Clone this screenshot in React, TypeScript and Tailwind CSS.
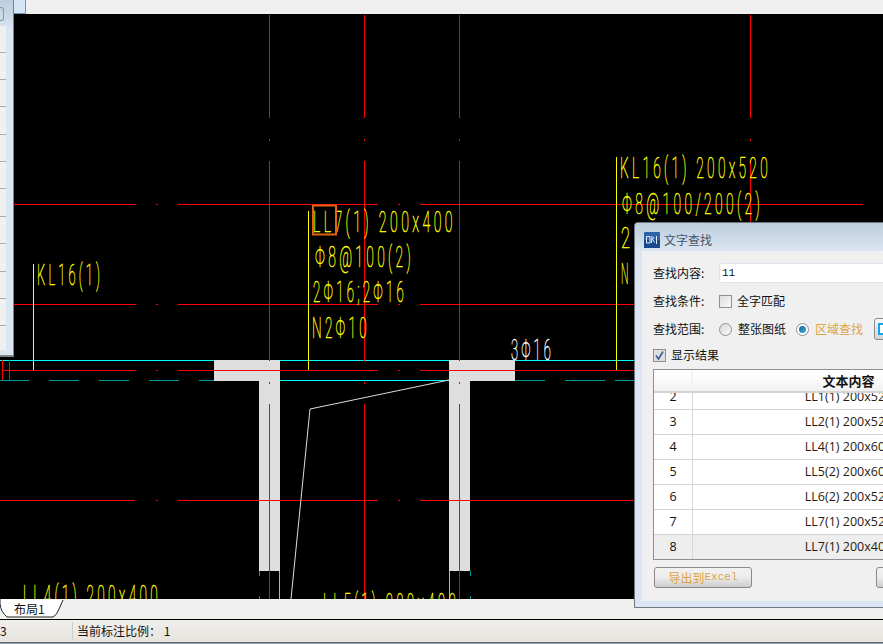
import React from 'react';

const CJK = "font-['Noto_Sans_CJK_SC','Noto_Sans',sans-serif]";

// drawing data, page coordinates (the svg viewBox starts at y=14)
const redH: [number, number, number][] = [
    [204, 14, 136], [204, 156, 158], [204, 178, 378], [204, 398, 400], [204, 420, 863],
    [304, 14, 136], [304, 156, 158], [304, 178, 378], [304, 398, 400], [304, 420, 640],
    [370, 2, 136], [370, 156, 158], [370, 178, 378], [370, 398, 400], [370, 420, 640],
    [500, 0, 135], [500, 156, 158], [500, 178, 378], [500, 398, 400], [500, 420, 640],
];

const redV: [number, number, number][] = [269, 364, 459].flatMap((x) => [
    [x, 15, 118], [x, 139, 141], [x, 161, 361], [x, 382, 384], [x, 404, 599],
] as [number, number, number][]).concat([[750, 15, 118], [750, 139, 141], [750, 160, 222]]);

// w includes the trailing letter gap
const cadLabels: { x: number; y: number; w: number; t: string; fill?: string }[] = [
    { x: 37, y: 285, w: 66, t: 'KL16(1)' },
    { x: 313, y: 232, w: 143, t: 'LL7(1) 200x400' },
    { x: 315, y: 267, w: 99, t: 'Φ8@100(2)' },
    { x: 313, y: 302, w: 94, t: '2Φ16;2Φ16' },
    { x: 312, y: 338, w: 58, t: 'N2Φ10' },
    { x: 511, y: 360, w: 43, t: '3Φ16', fill: '#ffffff' },
    { x: 620, y: 178, w: 151, t: 'KL16(1) 200x520' },
    { x: 622, y: 214, w: 141, t: 'Φ8@100/200(2)' },
    { x: 621, y: 248, w: 13, t: '2' },
    { x: 621, y: 284, w: 10, t: 'N' },
    { x: 23, y: 606, w: 138, t: 'LL4(1) 200x400' },
    { x: 323, y: 614, w: 136, t: 'LL5(1) 200x400' },
];

const rows = [
    { n: 2, t: 'LL1(1) 200x520' },
    { n: 3, t: 'LL2(1) 200x520' },
    { n: 4, t: 'LL4(1) 200x600' },
    { n: 5, t: 'LL5(2) 200x600' },
    { n: 6, t: 'LL6(2) 200x520' },
    { n: 7, t: 'LL7(1) 200x520' },
    { n: 8, t: 'LL7(1) 200x400', selected: true },
];

function Drawing() {
    return (
        <svg className="block w-full h-full" viewBox="0 14 883 585" width="883" height="585">
            <g shapeRendering="crispEdges">
                {/* columns */}
                <path d="M214 360H280V571H259V381H214Z" fill="#dedede" />
                <path d="M449 360H515V381H470V571H449Z" fill="#dedede" />

                {/* cyan wall lines */}
                <path d="M0 360.5H214M280 360.5H449M515 360.5H640M280 380.5H449M279.5 571V599M449.5 571V599" stroke="#00ffff" fill="none" />
                <path d="M0 380.5H29M49 380.5H79M99 380.5H129M149 380.5H179M199 380.5H214M515 380.5H545M565 380.5H605M615 380.5H640M259.5 571V576M259.5 596V599M470.5 571V576M470.5 596V599" stroke="#009a9a" fill="none" />

                {redH.map(([y, a, b], i) => (
                    <rect key={i} x={a} y={y} width={b - a} height={1} fill="#ff0000" />
                ))}
                {redV.map(([x, a, b], i) => (
                    <rect key={i} x={x} y={a} width={1} height={b - a} fill="#ff0000" />
                ))}
                <path d="M2.5 360V380M9.5 360V380" stroke="#ff0000" fill="none" />

                {/* leaders */}
                <path d="M33.5 264V370M308.5 211V370M616.5 157V370" stroke="#ffff00" fill="none" />
            </g>

            <path d="M449 380L310 409L291 599" stroke="#dddddd" fill="none" />

            <g className="font-['Roboto',sans-serif] font-thin">
                {cadLabels.map((l) => (
                    <text
                        key={l.t + l.x}
                        x={l.x}
                        y={l.y}
                        fontSize="29"
                        letterSpacing="7"
                        fill={l.fill ?? '#ffff00'}
                        stroke={l.fill ?? '#ffff00'}
                        strokeWidth="0.5"
                        textLength={l.w}
                        lengthAdjust="spacingAndGlyphs"
                    >
                        {l.t}
                    </text>
                ))}
            </g>

            {/* search hit */}
            <rect x="313" y="205.5" width="23" height="29" fill="none" stroke="#e8610f" strokeWidth="2" />
        </svg>
    );
}

function LeftPanel() {
    return (
        <div className="absolute left-0 top-[-14px] w-[14px] h-[357px] flex flex-col border-r border-b-2 border-[#79838e] bg-[#dbe6f3]">
            <div className="h-[26px] shrink-0 bg-gradient-to-b from-[#bccddd] to-[#d6e2ee] flex items-center">
                <div className="w-[4px] h-[14px] rounded-r-[3px] border border-l-0 border-[#8a97a5] mt-[2px]" />
            </div>
            <div className="w-[6px] h-[324px] bg-[#f0f0f0] flex flex-col pt-[25.5px] gap-[26.4px]">
                {[0, 1, 2, 3, 4, 5, 6, 7, 8, 9, 10].map((i) => (
                    <div key={i} className="h-px shrink-0 bg-[#ababab]" />
                ))}
            </div>
        </div>
    );
}

function LogoIcon() {
    return (
        <svg width="16" height="16" viewBox="0 0 16 16" className="shrink-0">
            <rect x="0" y="0" width="16" height="16" rx="1" fill="#2a63a8" />
            <rect x="0" y="8" width="16" height="8" fill="#174a8c" />
            <path d="M2.5 4.5H6V11H2.5ZM8 4L7.5 11M10 5L8.5 7.5L10.5 10.5M12.5 4V12" stroke="#e6eef6" fill="none" />
        </svg>
    );
}

function Dialog() {
    return (
        <div className={`absolute left-[634px] top-[208px] w-[400px] h-[386px] flex flex-col border border-[#6f7780] rounded-t-[4px] bg-[#dce6f2] ${CJK} text-[12px] leading-none text-[#111]`}>
            <div className="h-[28px] shrink-0 rounded-t-[3px] bg-gradient-to-b from-[#bccddd] to-[#dbe6f1] flex items-center gap-[4px] pl-[9px] pt-[6px] text-[#44546a]">
                <LogoIcon />
                <span>文字查找</span>
            </div>
            <div className="ml-[7px] w-[380px] h-[350px] bg-[#f0f0f0] flex flex-col pl-[11px] pt-[12px]">
                <div className="flex items-center h-[20px]">
                    <span className="w-[66px]">查找内容:</span>
                    <div className="w-[300px] h-[20px] bg-white border border-[#dfe5ee] rounded-[2px] flex items-center pl-[2px] font-['Liberation_Mono',monospace] text-[11px]">11</div>
                </div>
                <div className="flex items-center h-[14px] mt-[11px]">
                    <span className="w-[66px]">查找条件:</span>
                    <div className="w-[13px] h-[13px] border border-[#8e8f8f] bg-gradient-to-br from-[#dcdcdc] to-[#fafafa]" />
                    <span className="ml-[5px]">全字匹配</span>
                </div>
                <div className="flex items-center h-[22px] mt-[10px]">
                    <span className="w-[66px]">查找范围:</span>
                    <div className="w-[13px] h-[13px] rounded-full border border-[#8e8f8f] bg-gradient-to-br from-[#d8d8d8] to-[#fafafa]" />
                    <span className="ml-[6px]">整张图纸</span>
                    <div className="ml-[10px] w-[13px] h-[13px] rounded-full border border-[#8e8f8f] bg-white flex items-center justify-center">
                        <div className="w-[7px] h-[7px] rounded-full bg-gradient-to-br from-[#1c5f8e] to-[#36b4e8]" />
                    </div>
                    <span className="ml-[6px] text-[#dfa344]">区域查找</span>
                    <div className="ml-[11px] w-[24px] h-[22px] shrink-0 border border-[#8a8a8a] rounded-[3px] bg-gradient-to-b from-[#f8f8f8] to-[#d4d4d4] flex items-center pl-[3px]">
                        <div className="w-[12px] h-[12px] border-2 border-[#12a4ee] bg-white" />
                    </div>
                </div>
                <div className="flex items-center h-[14px] mt-[8px]">
                    <div className="w-[13px] h-[13px] border border-[#8e8f8f] bg-[#dfdfdf] flex items-center justify-center">
                        <svg width="11" height="11" viewBox="0 0 11 11">
                            <path d="M2 5.5L4.5 9L9 1.5" stroke="#3c5a94" strokeWidth="1.6" fill="none" />
                        </svg>
                    </div>
                    <span className="ml-[5px]">显示结果</span>
                </div>

                {/* result table */}
                <div className="mt-[7px] w-[369px] h-[191px] border border-[#8b8f94] flex flex-col bg-white overflow-hidden">
                    <div className="h-[23px] shrink-0 flex border-b-2 border-[#d4d4d4] bg-gradient-to-b from-white via-[#fafafa] to-[#f0f0f0] font-bold">
                        <div className="w-[39px] border-r-2 border-[#f4f4f4]" />
                        <div className="w-[311px] flex items-center justify-center text-[13px]">文本内容</div>
                    </div>
                    <div className="flex-1 overflow-hidden">
                        <div className="-mt-[8px] font-['Open_Sans',sans-serif] text-[12.5px]">
                            {rows.map((r) => (
                                <div
                                    key={r.n}
                                    className={`h-[25px] flex items-center border-b-[1.5px] border-[#d4d4d4] ${r.selected ? 'bg-[#eeeeee]' : 'bg-white'}`}
                                >
                                    <div className="w-[39px] h-full flex items-center justify-center pt-px border-r-[1.5px] border-[#d8d8d8]">{r.n}</div>
                                    <div className="w-[311px] text-center pt-px whitespace-nowrap text-[#2a1a10]">{r.t}</div>
                                </div>
                            ))}
                        </div>
                    </div>
                </div>

                {/* footer buttons */}
                <div className="flex mt-[7px] h-[21px]">
                    <div className="ml-[1px] w-[98px] h-[21px] border border-[#8a8a8a] rounded-[3px] bg-gradient-to-b from-[#f2f2f2] via-[#ececec] to-[#cdcdcd] flex items-center justify-center text-[#dfa344]">
                        导出到<span className="font-['Liberation_Mono',monospace] text-[11px]">Excel</span>
                    </div>
                    <div className="ml-[124px] w-[60px] h-[21px] border border-[#8a8a8a] rounded-[3px] bg-gradient-to-b from-[#f2f2f2] via-[#ececec] to-[#cdcdcd]" />
                </div>
            </div>
        </div>
    );
}

export default function App() {
    return (
        <div className={`w-[883px] h-[644px] overflow-hidden flex flex-col bg-[#f0f0f0] ${CJK}`}>
            {/* top strip */}
            <div className="h-[14px] shrink-0 bg-[#efefef] pl-[14px]">
                <div className="w-[12px] h-[14px] bg-[#d6e5f5] border-r border-b border-[#6f93bb]" />
            </div>

            {/* drawing area, above the tab strip because the dialog hangs over it */}
            <div className="relative z-10 h-[585px] shrink-0 bg-black">
                <Drawing />
                <LeftPanel />
                <Dialog />
            </div>

            {/* layout tabs */}
            <div className="h-[21px] shrink-0 bg-[#f0f0f0] border-b border-black relative">
                <svg className="absolute left-0 top-0" width="66" height="19" viewBox="0 0 66 19">
                    <path d="M0 0V5Q1 13 7 18H53Q57 16 59 10L63 1" fill="#ffffff" stroke="#222222" />
                </svg>
                <span className="absolute left-[14px] top-[2px] text-[12px] leading-[16px] text-[#111]">布局1</span>
            </div>

            {/* status bar */}
            <div className="h-[22px] shrink-0 flex items-center bg-gradient-to-b from-[#f1efec] to-[#e8e4df] text-[12px] text-[#111]">
                <span className="w-[72px]">3</span>
                <div className="w-px h-[18px] bg-[#cfcfcf]" />
                <span className="ml-[4px]">当前标注比例： 1</span>
            </div>
            <div className="h-[2px] shrink-0 bg-gradient-to-b from-[#4a5058] to-[#a9bdd2]" />
        </div>
    );
}
